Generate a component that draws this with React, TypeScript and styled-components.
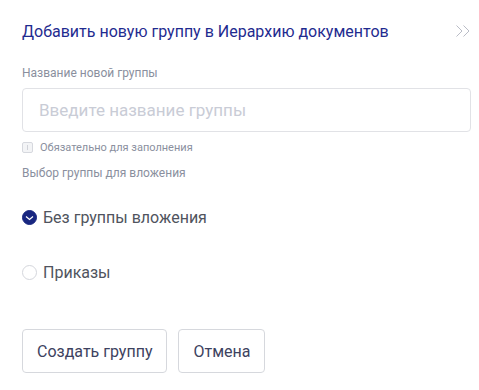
import styled, { createGlobalStyle } from "styled-components";

const GlobalStyle = createGlobalStyle`
  body {
    margin: 0;
    background: #ffffff;
    font-family: Roboto, "Noto Sans", sans-serif;
  }
`

const Panel = styled.div`
  width: 479px;
  height: 390px;
  box-sizing: border-box;
  padding: 20px 8px 0 22px;
  display: flex;
  flex-direction: column;
`
const Header = styled.div`
  display: flex;
  align-items: center;
  justify-content: space-between;
  height: 22px;
`
const Title = styled.h2`
  margin: 0;
  font-size: 16px;
  font-weight: 400;
  color: #1f2b8f;
`
const Collapse = styled.button`
  border: none;
  background: none;
  padding: 0;
  width: 16px;
  height: 14px;
  display: flex;
`
const Label = styled.div<{ $top: number }>`
  margin-top: ${p => p.$top}px;
  font-size: 12px;
  color: #8a8f9e;
  line-height: 14px;
`
const Input = styled.input`
  margin-top: 8px;
  height: 44px;
  box-sizing: border-box;
  border: 1px solid #e1e2e6;
  border-radius: 4px;
  padding: 0 16px;
  font-family: inherit;
  font-size: 17px;
  outline: none;
  &::placeholder {
    color: #c9ccd6;
  }
`
const Hint = styled.div`
  margin-top: 9px;
  display: flex;
  align-items: center;
  gap: 7px;
  font-size: 11px;
  color: #8a8f9e;
`
const HintIcon = styled.span`
  width: 9px;
  height: 9px;
  border: 1px solid #d6d8de;
  border-radius: 2px;
  background: #f3f4f6;
  position: relative;
  &::after {
    content: "";
    position: absolute;
    left: 4px;
    top: 2px;
    width: 1px;
    height: 5px;
    background: #d0d2d8;
  }
`
const Options = styled.div`
  margin-top: 30px;
  display: flex;
  flex-direction: column;
  gap: 40px;
`
const Option = styled.label`
  display: flex;
  align-items: center;
  gap: 6px;
  font-size: 16px;
  color: #50545e;
  height: 15px;
`
const Radio = styled.span<{ $checked?: boolean }>`
  width: 15px;
  height: 15px;
  box-sizing: border-box;
  border-radius: 50%;
  border: 1px solid ${p => (p.$checked ? "#182680" : "#d4d6dc")};
  background: ${p => (p.$checked ? "#182680" : "#fff")};
  display: flex;
  align-items: center;
  justify-content: center;
`
const Actions = styled.div`
  margin-top: 49px;
  display: flex;
  gap: 11px;
`
const Button = styled.button`
  height: 44px;
  box-sizing: border-box;
  padding: 0 14px;
  border: 1px solid #d6d8dd;
  border-radius: 4px;
  background: #fff;
  font-family: inherit;
  font-size: 16px;
  color: #3d4260;
`

export default function App() {
  return (
    <>
      <GlobalStyle />
      <Panel>
        <Header>
          <Title>Добавить новую группу в Иерархию документов</Title>
          <Collapse>
            <svg width="16" height="14" viewBox="0 0 16 14" fill="none" stroke="#b9bcc6" strokeWidth="1">
              <path d="M1.5 1.5 L7 7 L1.5 12.5" />
              <path d="M8.5 1.5 L14 7 L8.5 12.5" />
            </svg>
          </Collapse>
        </Header>
        <Label $top={24}>Название новой группы</Label>
        <Input placeholder="Введите название группы" />
        <Hint>
          <HintIcon />
          Обязательно для заполнения
        </Hint>
        <Label $top={12}>Выбор группы для вложения</Label>
        <Options>
          <Option>
            <Radio $checked>
              <svg width="9" height="6" viewBox="0 0 9 6" fill="none" stroke="#fff" strokeWidth="1.2">
                <path d="M1 1.5 L4.5 4.5 L8 1.5" />
              </svg>
            </Radio>
            Без группы вложения
          </Option>
          <Option>
            <Radio />
            Приказы
          </Option>
        </Options>
        <Actions>
          <Button>Создать группу</Button>
          <Button>Отмена</Button>
        </Actions>
      </Panel>
    </>
  )
}
